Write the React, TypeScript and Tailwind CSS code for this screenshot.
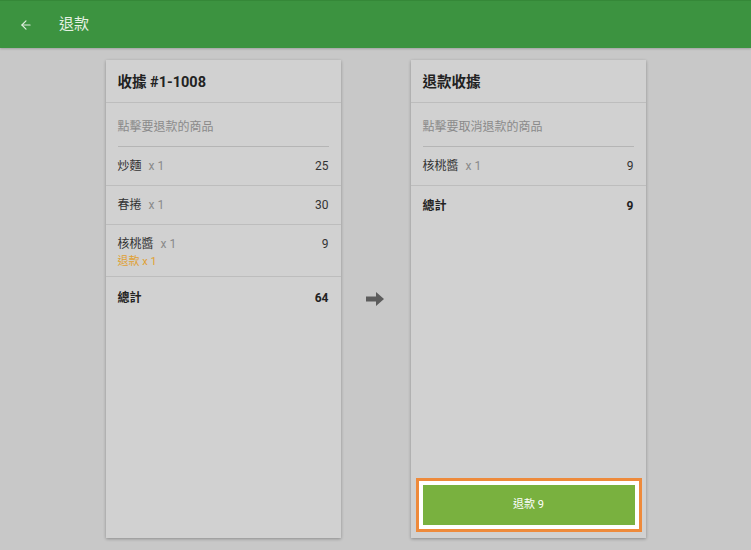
import React from 'react';
import { ArrowLeft } from 'lucide-react';

const font = { fontFamily: 'Roboto, "Noto Sans CJK TC", sans-serif' };

function Row({ name, qty, price, refund, last }: { name: string; qty: string; price: string; refund?: string; last?: boolean }) {
  return (
    <div className={`flex justify-between px-3 pt-[11px] ${refund ? 'pb-[6px]' : 'pb-[11px]'} ${last ? '' : 'border-b border-[#bdbdbd]'}`}>
      <div>
        <div className="text-[12px] leading-4 text-[#333]">
          {name}
          <span className="ml-[7px] text-[#8a8a8a]">{qty}</span>
        </div>
        {refund && <div className="mt-[2px] text-[11px] leading-4 text-[#e0a030]">{refund}</div>}
      </div>
      <div className="text-[12px] leading-4 text-[#333]">{price}</div>
    </div>
  );
}

function Card({ title, hint, children }: { title: string; hint: string; children: React.ReactNode }) {
  return (
    <div className="flex h-[478px] w-[235px] flex-col bg-[#d1d1d1] shadow-[0_1px_3px_rgba(0,0,0,0.3)]">
      <div className="flex h-[43px] items-center border-b border-[#bdbdbd] px-3 pt-[4px] text-[14.5px] font-bold text-[#222]">
        {title}
      </div>
      <div className="mx-3 flex h-[44px] items-center border-b border-[#b5b5b5] pt-[4px] text-[12px] text-[#8a8a8a]">
        {hint}
      </div>
      {children}
    </div>
  );
}

export default function App() {
  return (
    <div className="h-[550px] w-full bg-[#c8c8c8]" style={font}>
      {/* top bar */}
      <div className="flex h-12 items-center border-t border-[#358838] bg-[#3c9340] shadow-[0_1px_2px_rgba(0,0,0,0.2)]">
        <ArrowLeft className="ml-[19px] h-[14px] w-[14px] text-[#dfeedd]" strokeWidth={2} />
        <span className="ml-[26px] text-[15px] text-[#e6f1e4]">退款</span>
      </div>

      <div className="flex justify-center pt-3">
        <Card title="收據 #1-1008" hint="點擊要退款的商品">
          <Row name="炒麵" qty="x 1" price="25" />
          <Row name="春捲" qty="x 1" price="30" />
          <Row name="核桃醬" qty="x 1" price="9" refund="退款 x 1" />
          <div className="flex justify-between px-3 pt-[13px] text-[12px] font-bold leading-4 text-[#222]">
            <span>總計</span>
            <span>64</span>
          </div>
        </Card>

        <div className="flex w-[70px] items-center justify-center">
          <svg width="18" height="14" viewBox="0 0 18 14" className="ml-[-2px]">
            <path d="M0 4.5h10V0l8 7-8 7V9.5H0z" fill="#5c5c5c" />
          </svg>
        </div>

        <Card title="退款收據" hint="點擊要取消退款的商品">
          <Row name="核桃醬" qty="x 1" price="9" />
          <div className="flex justify-between px-3 pt-[12px] text-[12px] font-bold leading-4 text-[#222]">
            <span>總計</span>
            <span>9</span>
          </div>
          <div className="mt-auto mb-[6px] ml-[5px] mr-[4px] border-[3px] border-[#ee8a3b] bg-white p-1">
            <button className="flex h-[40px] w-full items-center justify-center bg-[#79b13f] text-[11px] text-white">
              退款 9
            </button>
          </div>
        </Card>
      </div>
    </div>
  );
}
